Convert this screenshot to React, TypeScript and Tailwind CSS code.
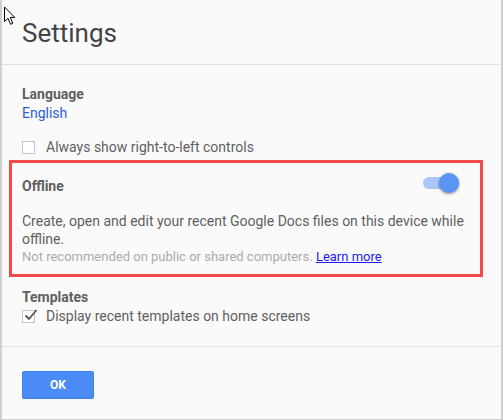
function Checkbox({ checked = false }: { checked?: boolean }) {
  return (
    <span className="relative block h-[13px] w-[13px] shrink-0 border border-[#c4c4c4] bg-white">
      {checked && (
        <svg
          className="absolute left-[1px] top-[-3px]"
          width="14"
          height="14"
          viewBox="0 0 14 14"
          fill="none"
        >
          <path d="M1.5 7.5 L5 11 L12.5 2" stroke="#555" strokeWidth="1.8" />
        </svg>
      )}
    </span>
  )
}

function Toggle() {
  return (
    <span className="relative mr-[13px] -mt-[4px] block h-[20px] w-[36px] shrink-0">
      <span className="absolute left-0 top-[4px] h-[12px] w-[30px] rounded-full bg-[#a9c6f8]" />
      <span className="absolute left-[16px] top-0 h-[20px] w-[20px] rounded-full bg-[#5b95f3] shadow-[0_1px_3px_rgba(0,0,0,0.45)]" />
    </span>
  )
}

export default function App() {
  return (
    <div className="relative box-border h-[420px] w-[503px] overflow-hidden border-b border-l-2 border-r-2 border-[#d0d0d0] bg-[#fafafa] font-['Roboto',sans-serif] text-[14px] leading-[19px] text-[#5f5f5f]">
      {/* mouse pointer */}
      <svg className="absolute left-[1px] top-[6px]" width="13" height="20" viewBox="0 0 13 20">
        <path
          d="M1.5 1 L1.5 15.5 L5 12.3 L7.6 18.3 L9.8 17.3 L7.3 11.4 L11.8 11.4 Z"
          fill="#fff"
          stroke="#000"
          strokeWidth="1"
          strokeLinejoin="round"
        />
      </svg>

      <header className="box-border h-[65px] border-b border-[#e2e2e2] pl-[20px] pt-[18px]">
        <h1 className="text-[26px] leading-[30px] text-[#444]">Settings</h1>
      </header>

      <div className="pl-[20px] pt-[20px]">
        <p className="font-bold">Language</p>
        <p className="text-[#2b5fd9]">English</p>

        <label className="mt-[15px] flex items-center gap-[11px]">
          <Checkbox />
          <span>Always show right-to-left controls</span>
        </label>

        <section className="mt-[3px] -ml-[13px] box-border w-[474px] border-[3px] border-[#f04a4a] pb-[8px] pl-[10px] pr-[8px] pt-[14px]">
          <div className="flex items-start justify-between">
            <p className="font-bold">Offline</p>
            <Toggle />
          </div>
          <p className="mt-[16px] leading-[18px]">
            Create, open and edit your recent Google Docs files on this device while offline.
          </p>
          <p className="text-[13px] leading-[18px] text-[#ababab]">
            Not recommended on public or shared computers.{' '}
            <a className="text-[#1a1aee] underline">Learn more</a>
          </p>
        </section>

        <p className="mt-[11px] font-bold">Templates</p>
        <label className="flex items-center gap-[11px]">
          <Checkbox checked />
          <span>Display recent templates on home screens</span>
        </label>
      </div>

      <div className="mt-[20px] border-t border-[#e2e2e2] pl-[20px] pt-[24px]">
        <button className="box-border h-[28px] w-[72px] rounded-[2px] border border-[#3f7fe9] bg-[#4b8bf5] text-[12px] font-bold text-white">
          OK
        </button>
      </div>
    </div>
  )
}
